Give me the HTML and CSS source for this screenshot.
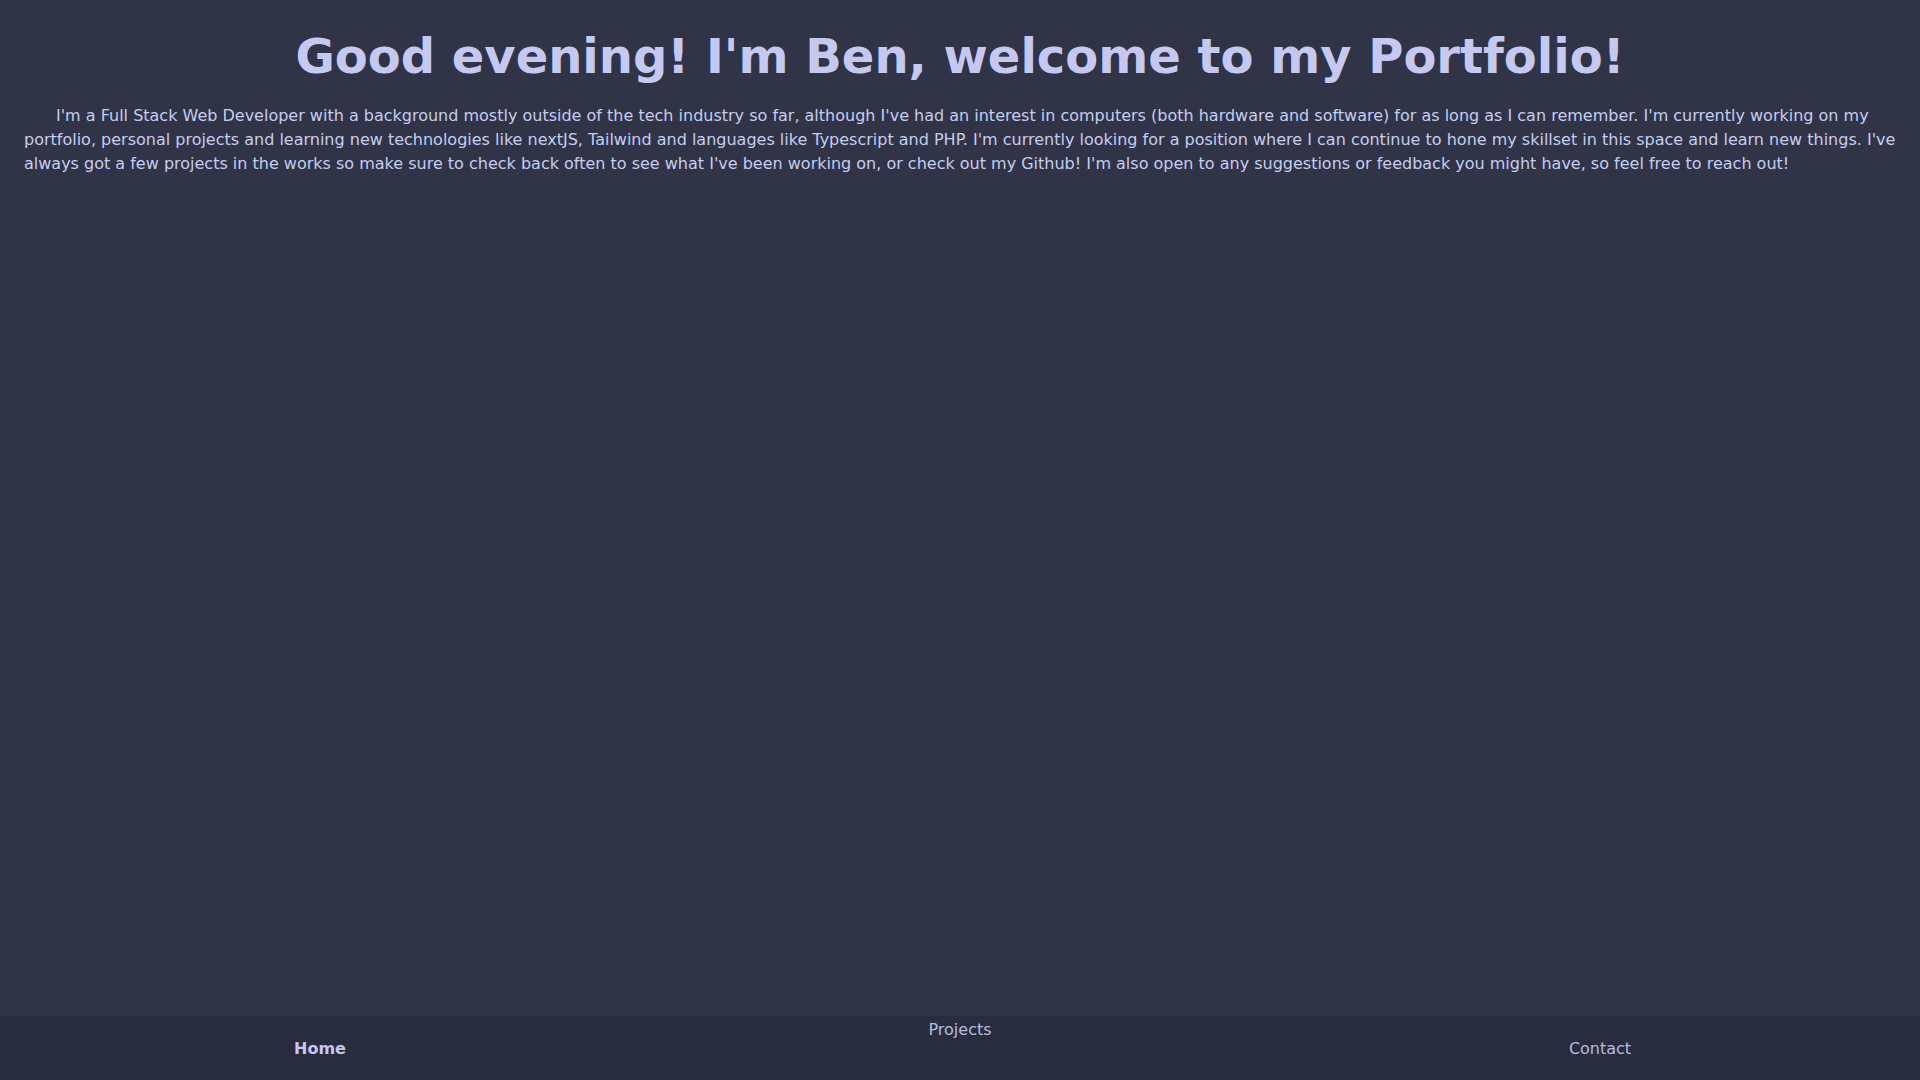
FILE: index.html
```html
<!DOCTYPE html>
<html lang="en">
<head>
<meta charset="utf-8">
<title>Ben's Portfolio</title>
<link rel="stylesheet" href="styles.css">
</head>
<body>
<main class="main">
  <h1 class="title">Good evening! I'm Ben, welcome to my Portfolio!</h1>
  <p class="intro">I'm a Full Stack Web Developer with a background mostly outside of the tech industry so far, although I've had an interest in computers (both hardware and software) for as long as I can remember. I'm currently working on my portfolio, personal projects and learning new technologies like nextJS, Tailwind and languages like Typescript and PHP. I'm currently looking for a position where I can continue to hone my skillset in this space and learn new things. I've always got a few projects in the works so make sure to check back often to see what I've been working on, or check out my Github! I'm also open to any suggestions or feedback you might have, so feel free to reach out!</p>
</main>
<footer class="nav">
  <a class="nav-link active" href="#">Home</a>
  <a class="nav-link top" href="#">Projects</a>
  <a class="nav-link" href="#">Contact</a>
</footer>
</body>
</html>
```
FILE: styles.css
```css
* { box-sizing: border-box; }
html, body { margin: 0; padding: 0; }
body {
  background: #303446;
  font-family: "DejaVu Sans", sans-serif;
  min-height: 100vh;
  display: flex;
  flex-direction: column;
}
.main {
  flex: 1;
  padding: 0 24px;
}
.title {
  margin: 28px 0 0;
  text-align: center;
  font-size: 48px;
  line-height: 56px;
  font-weight: bold;
  color: #c5c9f1;
}
.intro {
  margin: 20px 0 0;
  font-size: 16px;
  line-height: 24px;
  text-indent: 32px;
  color: #c6cdf2;
}
.nav {
  height: 64px;
  background: #292c3c;
  display: grid;
  grid-template-columns: 1fr 1fr 1fr;
  align-items: center;
  justify-items: center;
}
.nav-link {
  font-size: 16px;
  line-height: 19px;
  color: #b5bce2;
  text-decoration: none;
}
.nav-link.active {
  font-weight: bold;
  color: #c5c9f1;
}
.nav-link.top {
  align-self: start;
  margin-top: 4px;
}
```
